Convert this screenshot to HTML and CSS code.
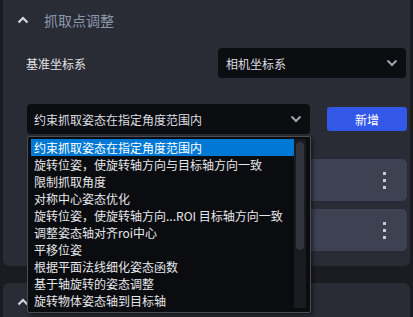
FILE: index.html
```html
<!DOCTYPE html>
<html lang="zh-CN">
<head>
  <meta charset="UTF-8">
  <title>抓取点调整</title>
  <link rel="stylesheet" href="styles.css">
</head>
<body>
  <div class="page">
    <section class="panel panel-first">
      <div class="panel-head">
        <svg class="caret" width="12" height="8" viewBox="0 0 12 8"><polyline points="1.5,6.5 6,2 10.5,6.5" fill="none" stroke="#d3d6dd" stroke-width="2.2"/></svg>
        <span class="panel-title">抓取点调整</span>
      </div>
      <div class="panel-body">
        <div class="form-row">
          <span class="form-label">基准坐标系</span>
          <div class="select select-frame">
            <span>相机坐标系</span>
            <svg width="12" height="8" viewBox="0 0 12 8"><polyline points="1.5,1.5 6,6 10.5,1.5" fill="none" stroke="#9ea3ad" stroke-width="2"/></svg>
          </div>
        </div>
        <div class="add-row">
          <div class="select-wrap">
            <div class="select select-method">
              <span>约束抓取姿态在指定角度范围内</span>
              <svg width="12" height="8" viewBox="0 0 12 8"><polyline points="1.5,1.5 6,6 10.5,1.5" fill="none" stroke="#9ea3ad" stroke-width="2"/></svg>
            </div>
            <div class="option-list">
              <ul class="options">
                <li class="option selected">约束抓取姿态在指定角度范围内</li>
                <li class="option">旋转位姿，使旋转轴方向与目标轴方向一致</li>
                <li class="option">限制抓取角度</li>
                <li class="option">对称中心姿态优化</li>
                <li class="option">旋转位姿，使旋转轴方向...ROI 目标轴方向一致</li>
                <li class="option">调整姿态轴对齐roi中心</li>
                <li class="option">平移位姿</li>
                <li class="option">根据平面法线细化姿态函数</li>
                <li class="option">基于轴旋转的姿态调整</li>
                <li class="option">旋转物体姿态轴到目标轴</li>
              </ul>
              <div class="scrollbar"><div class="scroll-thumb"></div></div>
            </div>
          </div>
          <button class="add-btn">新增</button>
        </div>
        <div class="card"><span class="kebab"><i></i><i></i><i></i></span></div>
        <div class="card"><span class="kebab"><i></i><i></i><i></i></span></div>
      </div>
    </section>
    <section class="panel panel-next">
      <div class="panel-head">
        <svg class="caret" width="12" height="8" viewBox="0 0 12 8"><polyline points="1.5,6.5 6,2 10.5,6.5" fill="none" stroke="#d3d6dd" stroke-width="2.2"/></svg>
      </div>
    </section>
  </div>
</body>
</html>
```

FILE: styles.css
```css
body {
  margin: 0;
  width: 413px;
  height: 317px;
  overflow: hidden;
  background: #1b1c21;
  font-family: "Noto Sans CJK SC", "Noto Sans", sans-serif;
  font-size: 12px;
  color: #e2e3e6;
}
.page {
  padding: 0 3px 0 3px;
}
.panel {
  background: #2a2c35;
}
.panel-first {
  height: 266px;
  border-radius: 0 0 6px 6px;
  margin-bottom: 17px;
}
.panel-next {
  height: 34px;
  border-radius: 6px 6px 0 0;
}
.panel-head {
  height: 40px;
  display: flex;
  align-items: center;
  padding-left: 14px;
}
.panel-next .panel-head {
  height: 34px;
  box-sizing: border-box;
  align-items: flex-start;
  padding-top: 16px;
}
.caret {
  display: block;
  margin-top: -1px;
}
.panel-title {
  margin-left: 15px;
  font-size: 14px;
  color: #8b97aa;
}
.panel-body {
  padding: 8px 3px 0 24px;
}
.form-row {
  display: flex;
  align-items: center;
  justify-content: space-between;
  height: 30px;
}
.form-label {
  margin-left: -1px;
}
.select {
  height: 30px;
  box-sizing: border-box;
  background: #0c0d11;
  border-radius: 4px;
  display: flex;
  align-items: center;
  justify-content: space-between;
  padding: 0 8px 0 8px;
  color: #dcdde0;
}
.select-frame {
  width: 188px;
  margin-right: 1px;
}
.select-method {
  width: 283px;
  padding-left: 7px;
}
.add-row {
  display: flex;
  align-items: center;
  margin-top: 26px;
  height: 30px;
}
.select-wrap {
  position: relative;
}
.add-btn {
  margin-left: 17px;
  width: 80px;
  height: 24px;
  border: none;
  border-radius: 3px;
  background: #3358e8;
  color: #fff;
  font-family: inherit;
  font-size: 12px;
  padding: 0;
}
.option-list {
  position: absolute;
  left: 0;
  top: 32px;
  width: 284px;
  height: 177px;
  box-sizing: border-box;
  border: 1px solid #4b4d56;
  border-radius: 2px;
  background: #0b0c10;
  box-shadow: 2px 2px 4px rgba(0, 0, 0, 0.5);
  padding: 2px 4px 4px 3px;
  display: flex;
  z-index: 5;
}
.options {
  list-style: none;
  margin: 0;
  padding: 0;
  width: 263px;
}
.option {
  height: 17px;
  line-height: 17px;
  padding-left: 3px;
  white-space: nowrap;
  color: #e6e7ea;
}
.option.selected {
  background: #0078d4;
  color: #fff;
}
.scrollbar {
  width: 12px;
  background: #1a1b20;
  padding: 3px 2px;
  box-sizing: border-box;
}
.scroll-thumb {
  height: 108px;
  border-radius: 4px;
  background: #30323c;
}
.card {
  height: 42px;
  margin-top: 25px;
  background: #3d4152;
  border-radius: 5px;
  display: flex;
  align-items: center;
  justify-content: flex-end;
  padding-right: 21px;
}
.card + .card {
  margin-top: 8px;
}
.kebab {
  display: flex;
  flex-direction: column;
  gap: 4px;
}
.kebab i {
  display: block;
  width: 3px;
  height: 3px;
  background: #c9cbd3;
}
```
